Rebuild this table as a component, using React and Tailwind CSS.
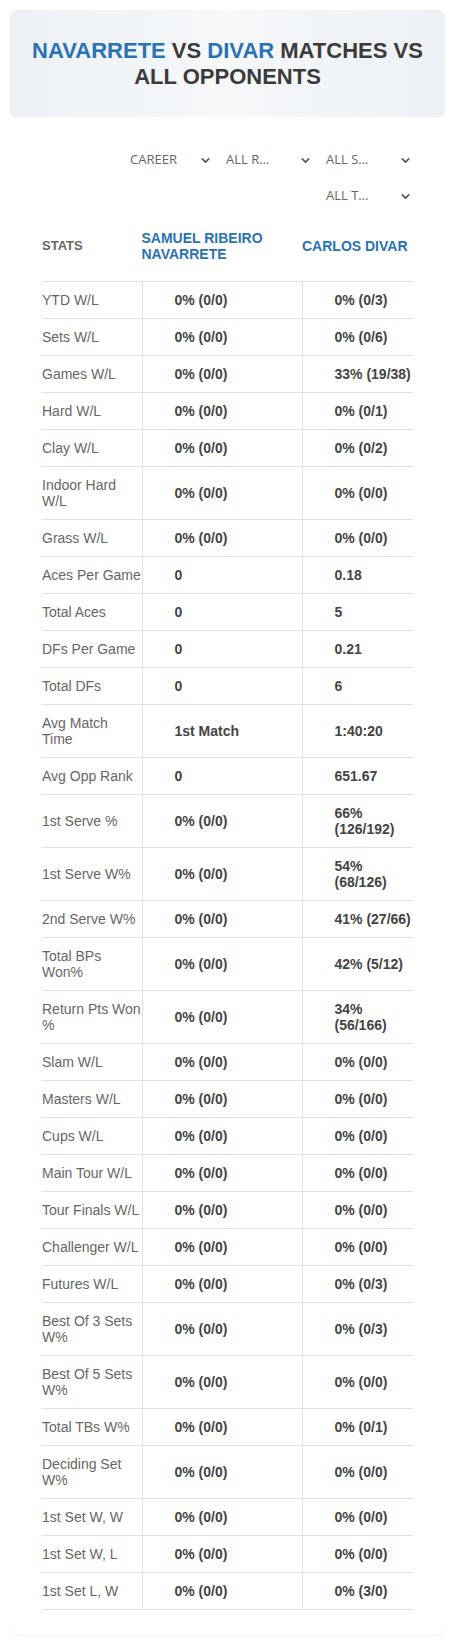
import { ChevronDown } from "lucide-react";

const rows = [
  ["YTD W/L", "0% (0/0)", "0% (0/3)"],
  ["Sets W/L", "0% (0/0)", "0% (0/6)"],
  ["Games W/L", "0% (0/0)", "33% (19/38)"],
  ["Hard W/L", "0% (0/0)", "0% (0/1)"],
  ["Clay W/L", "0% (0/0)", "0% (0/2)"],
  ["Indoor Hard W/L", "0% (0/0)", "0% (0/0)"],
  ["Grass W/L", "0% (0/0)", "0% (0/0)"],
  ["Aces Per Game", "0", "0.18"],
  ["Total Aces", "0", "5"],
  ["DFs Per Game", "0", "0.21"],
  ["Total DFs", "0", "6"],
  ["Avg Match Time", "1st Match", "1:40:20"],
  ["Avg Opp Rank", "0", "651.67"],
  ["1st Serve %", "0% (0/0)", "66% (126/192)"],
  ["1st Serve W%", "0% (0/0)", "54% (68/126)"],
  ["2nd Serve W%", "0% (0/0)", "41% (27/66)"],
  ["Total BPs Won%", "0% (0/0)", "42% (5/12)"],
  ["Return Pts Won %", "0% (0/0)", "34% (56/166)"],
  ["Slam W/L", "0% (0/0)", "0% (0/0)"],
  ["Masters W/L", "0% (0/0)", "0% (0/0)"],
  ["Cups W/L", "0% (0/0)", "0% (0/0)"],
  ["Main Tour W/L", "0% (0/0)", "0% (0/0)"],
  ["Tour Finals W/L", "0% (0/0)", "0% (0/0)"],
  ["Challenger W/L", "0% (0/0)", "0% (0/0)"],
  ["Futures W/L", "0% (0/0)", "0% (0/3)"],
  ["Best Of 3 Sets W%", "0% (0/0)", "0% (0/3)"],
  ["Best Of 5 Sets W%", "0% (0/0)", "0% (0/0)"],
  ["Total TBs W%", "0% (0/0)", "0% (0/1)"],
  ["Deciding Set W%", "0% (0/0)", "0% (0/0)"],
  ["1st Set W, W", "0% (0/0)", "0% (0/0)"],
  ["1st Set W, L", "0% (0/0)", "0% (0/0)"],
  ["1st Set L, W", "0% (0/0)", "0% (3/0)"],
];

const filters = ["CAREER", "ALL R…", "ALL S…", "ALL T…"];

const Filter = ({ label, first }) => (
  <div
    className={`w-[95px] h-[30px] flex items-center justify-between pr-[1px] text-[13px] text-[#666] font-['Open_Sans',sans-serif] ${
      first ? "pl-[12px]" : "pl-[8px]"
    }`}
  >
    <span>{label}</span>
    <ChevronDown size={13} strokeWidth={3} className="text-[#555]" />
  </div>
);

const App = () => {
  return (
    <div className="bg-white p-[10px] font-['Liberation_Sans',Arial,sans-serif]">
      {/* Title */}
      <div className="rounded-[6px] bg-gradient-to-r from-[#edf1f5] via-[#f6f8fa] to-[#edf1f5] py-[27.5px] px-[12px] text-center">
        <h1 className="text-[22px] leading-[26px] font-bold uppercase text-[#3b3b3b]">
          <span className="text-[#2a72b3]">Navarrete</span> vs{" "}
          <span className="text-[#2a72b3]">Divar</span> matches vs all opponents
        </h1>
      </div>

      {/* Body */}
      <div className="mx-[2px] rounded-b-[6px] shadow-[0_1px_1px_rgba(0,0,0,0.06)] pt-[28px] pb-[25px] px-[30px]">
        <div className="flex flex-wrap justify-end gap-x-[5px] gap-y-[6px] pl-[70px]">
          {filters.map((f, i) => (
            <Filter key={f} label={f} first={i === 0} />
          ))}
        </div>

        {/* Header row */}
        <div className="flex items-center py-[19px] text-[14px] leading-[16px] font-bold uppercase">
          <div className="w-[99.5px] text-[13px] text-[#666]">Stats</div>
          <div className="w-[160.5px] text-[#2a72b3]">Samuel Ribeiro Navarrete</div>
          <div className="flex-1 text-[#2a72b3]">Carlos Divar</div>
        </div>

        {/* Rows */}
        <div className="border-t border-[#e0e0e0]">
          {rows.map(([label, a, b]) => (
            <div key={label} className="flex border-b border-[#e0e0e0] text-[14px] leading-[16px]">
              <div className="w-[99.5px] py-[10px] flex items-center text-[#666]">{label}</div>
              <div className="w-[160px] border-l border-[#e0e0e0] py-[10px] pl-[32px] flex items-center font-bold text-[#444]">
                {a}
              </div>
              <div className="flex-1 border-l border-[#e0e0e0] py-[10px] pl-[32px] flex items-center font-bold text-[#444]">
                {b}
              </div>
            </div>
          ))}
        </div>
      </div>
    </div>
  );
};

export default App;
